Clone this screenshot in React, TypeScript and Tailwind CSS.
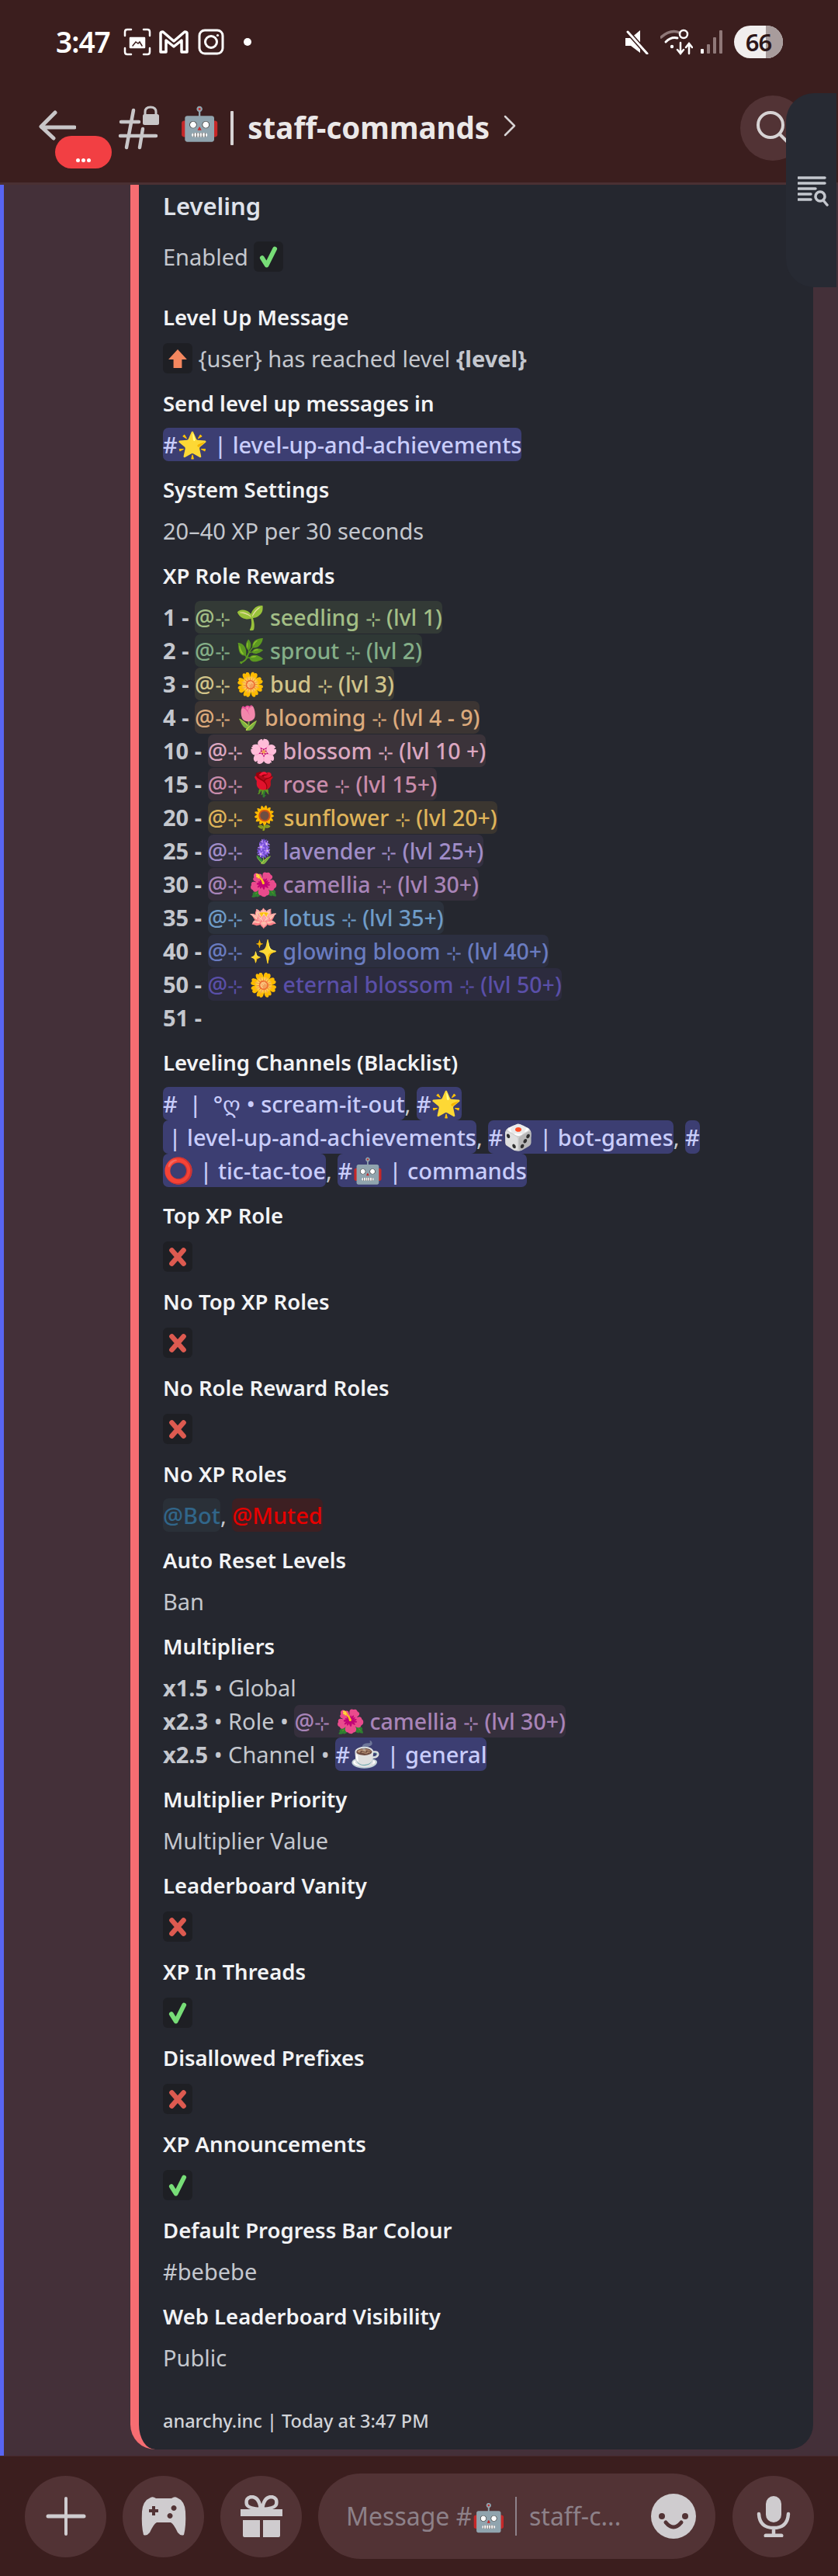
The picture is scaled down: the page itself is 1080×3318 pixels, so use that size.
import type { ReactNode } from "react";

type Role = { lvl: string; emoji: string; name: string; suffix: string; text: string; bg: string; slot: string };

const roles: Role[] = [
  { lvl: "1", emoji: "🌱", name: "seedling", suffix: "(lvl 1)", text: "text-[#a3bf86]", bg: "bg-[#333a36]", slot: "w-[49px]" },
  { lvl: "2", emoji: "🌿", name: "sprout", suffix: "(lvl 2)", text: "text-[#84ae88]", bg: "bg-[#2f3835]", slot: "w-[49px]" },
  { lvl: "3", emoji: "🌼", name: "bud", suffix: "(lvl 3)", text: "text-[#d2c48a]", bg: "bg-[#3a3a35]", slot: "w-[49px]" },
  { lvl: "4", emoji: "🌷", name: "blooming", suffix: "(lvl 4 - 9)", text: "text-[#dcaa7c]", bg: "bg-[#3c3533]", slot: "w-[42px]" },
  { lvl: "10", emoji: "🌸", name: "blossom", suffix: "(lvl 10 +)", text: "text-[#dba7c0]", bg: "bg-[#3b333a]", slot: "w-[49px]" },
  { lvl: "15", emoji: "🌹", name: "rose", suffix: "(lvl 15+)", text: "text-[#c98cab]", bg: "bg-[#383038]", slot: "w-[49px]" },
  { lvl: "20", emoji: "🌻", name: "sunflower", suffix: "(lvl 20+)", text: "text-[#dfb45a]", bg: "bg-[#3b3630]", slot: "w-[50px]" },
  { lvl: "25", emoji: "🪻", name: "lavender", suffix: "(lvl 25+)", text: "text-[#a08dc8]", bg: "bg-[#333040]", slot: "w-[49px]" },
  { lvl: "30", emoji: "🌺", name: "camellia", suffix: "(lvl 30+)", text: "text-[#a884b8]", bg: "bg-[#352f3c]", slot: "w-[49px]" },
  { lvl: "35", emoji: "🪷", name: "lotus", suffix: "(lvl 35+)", text: "text-[#6f9cc8]", bg: "bg-[#2c323d]", slot: "w-[49px]" },
  { lvl: "40", emoji: "✨", name: "glowing bloom", suffix: "(lvl 40+)", text: "text-[#6a7cc0]", bg: "bg-[#2c2f40]", slot: "w-[49px]" },
  { lvl: "50", emoji: "🌼", name: "eternal blossom", suffix: "(lvl 50+)", text: "text-[#5a4fa8]", bg: "bg-[#2c2b3e]", slot: "w-[49px]" },
];

function Channel({ children }: { children: ReactNode }) {
  return <span className="rounded-[7px] bg-[#3c3e72] py-[2px] font-medium text-[#c9cdfb]">{children}</span>;
}

function Emoji({ children }: { children: ReactNode }) {
  return <span className="text-[32px] leading-none">{children}</span>;
}

function Sparkle() {
  return <span className="text-[24px]">⊹</span>;
}

function RoleChip({ role }: { role: Role }) {
  return (
    <span className={`rounded-[7px] py-[2px] text-[28.5px] font-medium ${role.bg} ${role.text}`}>
      <span className="inline-block w-[48px] leading-none">@<Sparkle /></span>
      <span className={`inline-block text-center text-[30px] leading-none ${role.slot}`}>{role.emoji}</span>
      {role.name} <Sparkle /> {role.suffix}
    </span>
  );
}

function Row({ children }: { children: ReactNode }) {
  return <div className="h-[43px] whitespace-nowrap">{children}</div>;
}

function Field({ name, children }: { name: string; children: ReactNode }) {
  return (
    <div>
      <div className="text-[27.5px] leading-[43px] font-semibold text-[#f2f3f5]">{name}</div>
      <div className="mt-[10px] text-[29px] leading-[43px] text-[#c4c7ce]">{children}</div>
    </div>
  );
}

function EmojiBox({ children }: { children: ReactNode }) {
  return (
    <span className="mt-[2px] inline-flex h-[39px] w-[38px] items-center justify-center rounded-[6px] bg-[#1e1f24] align-top">
      {children}
    </span>
  );
}

function Cross() {
  return (
    <EmojiBox>
      <svg viewBox="0 0 24 24" className="h-[26px] w-[26px]">
        <path d="M5 4 19 20M19 4 5 20" stroke="#dd5a50" strokeWidth="6" strokeLinecap="round" />
      </svg>
    </EmojiBox>
  );
}

function Check() {
  return (
    <EmojiBox>
      <svg viewBox="0 0 24 24" className="h-[28px] w-[28px]">
        <path d="M5 13 10 21 19 3" fill="none" stroke="#77dd77" strokeWidth="5" strokeLinecap="round" strokeLinejoin="round" />
      </svg>
    </EmojiBox>
  );
}

function UpArrow() {
  return (
    <EmojiBox>
      <svg viewBox="0 0 24 24" className="h-[26px] w-[26px]">
        <path d="M12 1 23 13H17V23H7V13H1Z" fill="#f4875f" />
      </svg>
    </EmojiBox>
  );
}

function StatusBar() {
  return (
    <div className="flex h-[120px] items-start justify-between pl-[72px] pr-[71px] pt-[33px]">
      <div className="flex items-center text-white">
        <span className="mr-[17px] text-[37px] leading-[42px] font-semibold tracking-[-1px]">3:47</span>
        <svg viewBox="0 0 36 36" className="h-[36px] w-[36px]" fill="none" stroke="#fff" strokeWidth="2.5" strokeLinecap="round">
          <path d="M10 2H5Q2 2 2 5V10M26 2H31Q34 2 34 5V10M10 34H5Q2 34 2 31V26M26 34H31Q34 34 34 31V26" />
          <path d="M9 13H27V25H9Z" fill="#fff" strokeLinejoin="round" />
          <path d="M12 23 16 18 19 20 21 18 24 23" stroke="#3b1e1e" strokeWidth="1.5" />
        </svg>
        <svg viewBox="0 0 38 30" className="ml-[10px] h-[30px] w-[38px]" fill="none" stroke="#fff" strokeWidth="3.5" strokeLinejoin="round">
          <path d="M2 28V4Q2 2 5 2L19 14 33 2Q36 2 36 4V28H29V13L19 21 9 13V28Z" />
        </svg>
        <svg viewBox="0 0 34 34" className="ml-[12px] h-[34px] w-[34px]" fill="none" stroke="#fff" strokeWidth="3">
          <rect x="2" y="2" width="30" height="30" rx="7" />
          <circle cx="17" cy="17" r="7.5" />
          <circle cx="25.5" cy="8.5" r="1.6" fill="#fff" stroke="none" />
        </svg>
        <span className="ml-[25px] h-[10px] w-[10px] rounded-full bg-white" />
      </div>
      <div className="flex items-center">
        <svg viewBox="0 0 30 32" className="h-[32px] w-[30px]">
          <path d="M0 11H7L19 1V30L7 21H0Z" fill="#fff" />
          <path d="M3 3 28 31" stroke="#3b1e1e" strokeWidth="6" />
          <path d="M3 3 28 31" stroke="#fff" strokeWidth="3" strokeLinecap="round" />
        </svg>
        <svg viewBox="0 0 42 34" className="ml-[15px] h-[34px] w-[42px]" fill="none" strokeLinecap="round">
          <path d="M1 11Q13 0 25 5" stroke="#8f7878" strokeWidth="3.5" />
          <path d="M7 17Q14 10 22 12" stroke="#fff" strokeWidth="3" />
          <circle cx="15" cy="23" r="2.2" fill="#fff" />
          <circle cx="30" cy="7" r="5" stroke="#fff" strokeWidth="2.5" />
          <path d="M26 18V31M22 27 26 32 30 27M37 32V20M33 24 37 19 41 24" stroke="#fff" strokeWidth="2.5" />
        </svg>
        <svg viewBox="0 0 29 30" className="ml-[10px] h-[30px] w-[29px]">
          <rect x="0" y="24" width="4" height="6" rx="1" fill="#fff" />
          <rect x="8" y="18" width="4" height="12" rx="1" fill="#8f7878" />
          <rect x="16" y="9" width="4" height="21" rx="1" fill="#8f7878" />
          <rect x="24" y="0" width="4" height="30" rx="1" fill="#8f7878" />
        </svg>
        <div className="relative ml-[14px] flex h-[42px] w-[63px] items-center justify-center rounded-full bg-[#f1eeee]">
          <span className="absolute inset-y-0 right-0 w-[22px] rounded-r-full bg-[#a89c9c]" />
          <span className="relative text-[31px] leading-[42px] font-semibold tracking-[-1px] text-[#2c1618]">66</span>
        </div>
      </div>
    </div>
  );
}

function ChannelBar() {
  return (
    <div className="relative flex h-[116px] items-start pl-[50px]">
      <svg viewBox="0 0 48 40" className="mt-[21px] h-[40px] w-[48px]" fill="none" stroke="#c8c6c8" strokeWidth="5" strokeLinecap="round" strokeLinejoin="round">
        <path d="M46 23H4M21 4 3 22 19 37" />
      </svg>
      <span className="absolute left-[71px] top-[55px] flex h-[42px] w-[73px] items-end justify-center rounded-full bg-[#f23f43] pb-[8px]">
        <span className="flex gap-[2px]">
          <span className="h-[5px] w-[5px] rounded-full bg-white" />
          <span className="h-[5px] w-[5px] rounded-full bg-white" />
          <span className="h-[5px] w-[5px] rounded-full bg-white" />
        </span>
      </span>
      <svg viewBox="0 0 56 58" className="ml-[53px] mt-[16px] h-[58px] w-[56px]" fill="none" stroke="#c8c6c8" strokeWidth="4.5" strokeLinecap="round">
        <path d="M21 6 12 54M33 30 29 54M4 39H50M5 21H28" />
        <path d="M36 12V8Q36 2 43 2 50 2 50 8V12" strokeWidth="3" />
        <rect x="33" y="11" width="21" height="14" rx="2.5" fill="#c8c6c8" stroke="none" />
      </svg>
      <span className="ml-[24px] mt-[9px] text-[42px] leading-[58px]">🤖</span>
      <span className="ml-[14px] mt-[23px] h-[44px] w-[4px] rounded-[1px] bg-[#d7d3d4]" />
      <span className="ml-[18px] mt-[16px] text-[38.5px] leading-[56px] font-bold text-[#ebe8e8]">staff-commands</span>
      <svg viewBox="0 0 16 28" className="ml-[18px] mt-[28px] h-[28px] w-[16px]" fill="none" stroke="#d7d3d4" strokeWidth="2.5" strokeLinecap="round" strokeLinejoin="round">
        <path d="M2 2 14 14 2 26" />
      </svg>
      <div className="absolute left-[954px] top-[3px] flex h-[84px] w-[84px] items-center justify-center rounded-full bg-[#523335]">
        <svg viewBox="0 0 44 44" className="h-[44px] w-[44px]" fill="none" stroke="#d7d3d4" strokeWidth="4" strokeLinecap="round">
          <circle cx="19" cy="18" r="16" />
          <path d="M31 30 42 41" />
        </svg>
      </div>
    </div>
  );
}

function ComposerButton({ children }: { children: ReactNode }) {
  return <div className="flex h-[105px] w-[105px] shrink-0 items-center justify-center rounded-full bg-[#523335]">{children}</div>;
}

function Composer() {
  return (
    <div className="flex h-[155px] shrink-0 items-center border-t border-[#46292c] pl-[32px]">
      <ComposerButton>
        <svg viewBox="0 0 52 52" className="h-[52px] w-[52px]" stroke="#cfcccf" strokeWidth="5" strokeLinecap="round">
          <path d="M3 26H49" />
          <path d="M26 3V49" strokeWidth="4" />
        </svg>
      </ComposerButton>
      <div className="ml-[21px]">
        <ComposerButton>
          <svg viewBox="0 0 58 52" className="h-[52px] w-[58px]">
            <path fillRule="evenodd" fill="#cfcccf" d="M12 2Q15 0 19 3H39Q43 0 46 2 56 6 57 20 58 38 55 50 51 52 47 47 42 36 38 34H20Q16 36 11 47 7 52 3 50 0 38 1 20 2 6 12 2ZM14 13V17H10V21H14V25H18V21H22V17H18V13ZM42 12A3.5 3.5 0 1 0 42.1 12ZM37 22A3.5 3.5 0 1 0 37.1 22Z" />
          </svg>
        </ComposerButton>
      </div>
      <div className="ml-[21px]">
        <ComposerButton>
          <svg viewBox="0 0 54 54" className="h-[54px] w-[54px]" fill="#cfcccf">
            <path d="M0 18H54V27H0ZM3 32H25V54H5Q3 54 3 52ZM29 32H51V52Q51 54 49 54H29Z" />
            <path d="M26 18Q24 2 14 2 6 3 8 12 10 17 26 18ZM28 18Q30 2 40 2 48 3 46 12 44 17 28 18Z" fill="none" stroke="#cfcccf" strokeWidth="4.5" />
          </svg>
        </ComposerButton>
      </div>
      <div className="ml-[21px] flex h-[110px] w-[512px] shrink-0 items-center rounded-full bg-[#523335] pl-[36px]">
        <span className="text-[32px] leading-none text-[#8d8189]">Message #</span>
        <span className="text-[35px] leading-none">🤖</span>
        <span className="ml-[12px] h-[50px] w-[2px] bg-[#8d8189]" />
        <span className="ml-[16px] text-[32px] leading-none text-[#8d8189]">staff-c...</span>
        <div className="ml-auto mr-[25px] flex h-[58px] w-[58px] shrink-0 items-center justify-center rounded-full bg-[#cfcccf]">
          <svg viewBox="0 0 58 58" className="h-[58px] w-[58px]" fill="none">
            <circle cx="14" cy="29" r="4" fill="#523335" />
            <circle cx="44" cy="29" r="4" fill="#523335" />
            <path d="M19 37Q29 49 39 37" stroke="#523335" strokeWidth="5" strokeLinecap="round" />
          </svg>
        </div>
      </div>
      <div className="ml-[22px]">
        <ComposerButton>
          <svg viewBox="0 0 44 54" className="h-[54px] w-[44px]" fill="none" stroke="#cfcccf" strokeWidth="4.5" strokeLinecap="round">
            <rect x="12" y="1" width="20" height="34" rx="10" fill="#cfcccf" stroke="none" />
            <path d="M3 24Q4 42 22 42 40 42 41 24M22 42V52" />
            <path d="M12 52H32" strokeWidth="5" />
          </svg>
        </ComposerButton>
      </div>
    </div>
  );
}

export default function App() {
  return (
    <div className="relative flex h-[3318px] w-[1080px] flex-col overflow-hidden bg-[#3b1e1e] font-['Noto_Sans','Noto_Color_Emoji',sans-serif]">
      <div className="h-[238px] shrink-0 border-b-[3px] border-[#4a3033]">
        <StatusBar />
        <ChannelBar />
      </div>

      <div className="absolute right-[2px] top-[120px] flex h-[250px] w-[65px] items-center justify-center rounded-l-[36px] bg-[#272a33]">
        <svg viewBox="0 0 40 40" className="ml-[4px] mt-[1px] h-[40px] w-[40px]" fill="none" stroke="#c4c7ce" strokeWidth="3.5" strokeLinecap="round">
          <path d="M1 3H35M1 10H35M1 17H23M1 24H17M1 31H17" />
          <circle cx="29" cy="27" r="6" />
          <path d="M33 32 38 38" />
        </svg>
      </div>

      <div className="flex min-h-0 flex-1 bg-[#443039]">
        <div className="w-[5px] bg-[#5865f2]" />
        <div className="mb-[8px] ml-[163px] flex w-[880px] flex-col rounded-b-[32px] border-l-[11px] border-[#f66d72] bg-[#25272f] pl-[31px]">
          <div className="pt-[6px] text-[31px] leading-[43px] font-semibold text-[#dfe2ea]">Leveling</div>
          <div className="mt-[22px] text-[29px] leading-[43px] text-[#c4c7ce]">Enabled <Check /></div>
          <div className="mt-[35px] flex flex-col gap-[15px]">
            <Field name="Level Up Message"><UpArrow /> {"{user}"} has reached level <b>{"{level}"}</b></Field>
            <Field name="Send level up messages in"><Channel>#<Emoji>🌟</Emoji> | level-up-and-achievements</Channel></Field>
            <Field name="System Settings">20–40 XP per 30 seconds</Field>
            <Field name="XP Role Rewards">
              {roles.map((r) => (
                <Row key={r.lvl}><b>{r.lvl} - </b><RoleChip role={r} /></Row>
              ))}
              <Row><b>51 -</b></Row>
            </Field>
            <Field name="Leveling Channels (Blacklist)">
              <Row><Channel># &nbsp;| &nbsp;°ღ • scream-it-out</Channel>, <Channel>#<Emoji>🌟</Emoji></Channel></Row>
              <Row><Channel>&nbsp;| level-up-and-achievements</Channel>, <Channel>#<Emoji>🎲</Emoji> | bot-games</Channel>, <Channel>#</Channel></Row>
              <Row><Channel><Emoji>⭕</Emoji> | tic-tac-toe</Channel>, <Channel>#<Emoji>🤖</Emoji> | commands</Channel></Row>
            </Field>
            <Field name="Top XP Role"><Cross /></Field>
            <Field name="No Top XP Roles"><Cross /></Field>
            <Field name="No Role Reward Roles"><Cross /></Field>
            <Field name="No XP Roles">
              <span className="rounded-[7px] bg-[#2a3038] py-[2px] font-medium text-[#31668a]">@Bot</span>, <span className="rounded-[7px] bg-[#3d1f22] py-[2px] font-medium text-[#e60000]">@Muted</span>
            </Field>
            <Field name="Auto Reset Levels">Ban</Field>
            <Field name="Multipliers">
              <Row><b>x1.5</b> • Global</Row>
              <Row><b>x2.3</b> • Role • <RoleChip role={roles[8]} /></Row>
              <Row><b>x2.5</b> • Channel • <Channel>#<Emoji>☕</Emoji> | general</Channel></Row>
            </Field>
            <Field name="Multiplier Priority">Multiplier Value</Field>
            <Field name="Leaderboard Vanity"><Cross /></Field>
            <Field name="XP In Threads"><Check /></Field>
            <Field name="Disallowed Prefixes"><Cross /></Field>
            <Field name="XP Announcements"><Check /></Field>
            <Field name="Default Progress Bar Colour">#bebebe</Field>
            <Field name="Web Leaderboard Visibility">Public</Field>
          </div>
          <div className="mt-auto pb-[19px] text-[23.5px] leading-[36px] font-medium text-[#d1d3d8]">anarchy.inc | Today at 3:47 PM</div>
        </div>
      </div>

      <Composer />
    </div>
  );
}
